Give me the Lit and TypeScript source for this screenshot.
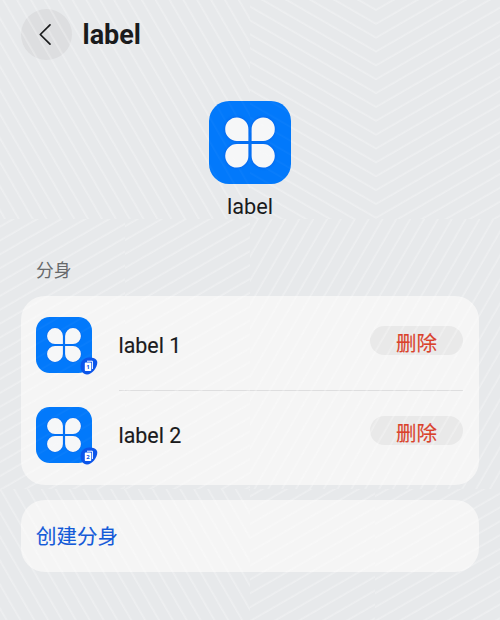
import { LitElement, html, css, svg } from "lit";
import { customElement, property } from "lit/decorators.js";

@customElement("app-icon")
class AppIcon extends LitElement {
  static styles = css`
    :host { display: block; position: relative; z-index: 2; width: 82px; height: 83px; }
    svg { display: block; width: 100%; height: 100%; }
    .tile { fill: #0279fb; }
    .glow { fill: #0767ed; filter: blur(1px); }
    .leaf { fill: #f6f7f8; }
  `;
  render() {
    const leaf = "M39.4 39.4H28A11.6 11.6 0 1 1 39.4 28Z";
    const turns = [0, 90, 180, 270];
    return html`<svg viewBox="0 0 82 82" preserveAspectRatio="none">
      <rect class="tile" width="82" height="82" rx="20"></rect>
      ${turns.map((a) => svg`<path class="glow" stroke="#0767ed" stroke-width="1.5" transform="rotate(${a} 41 41)" d=${leaf}></path>`)}
      ${turns.map((a) => svg`<path class="leaf" transform="rotate(${a} 41 41)" d=${leaf}></path>`)}
    </svg>`;
  }
}

@customElement("clone-row")
class CloneRow extends LitElement {
  @property({ type: Number }) index = 1;
  static styles = css`
    :host { display: flex; align-items: center; height: 56px; padding: 0 16px 0 15px; }
    .icon { position: relative; width: 56px; height: 56px; }
    app-icon { width: 56px; height: 56px; }
    .badge { position: absolute; z-index: 4; left: 44px; top: 39.5px; width: 18px; height: 18px; }
    .num { font: bold 6px "Noto Sans", sans-serif; fill: #0a4fe6; }
    .name { position: relative; z-index: 2; flex: 1; margin-left: 26.5px; padding-top: 2px; font-size: 21.4px; color: #191a1b; line-height: 28px; -webkit-text-stroke: .15px #191a1b; }
    .del { width: 93px; height: 28.5px; margin-top: -9px; border-radius: 14.5px; background: #e9e9e9; color: #da412b;
      font-size: 20.5px; line-height: 36px; text-align: center; -webkit-text-stroke: .12px #da412b; }
    .del span { position: relative; z-index: 2; }
  `;
  render() {
    return html`
      <div class="icon"><app-icon></app-icon>
        <svg class="badge" viewBox="0 0 18 18">
          <path fill="#0b55ea" d="M9 .5C13 .5 17.3 1.8 17.3 5.5C17.3 10.5 12 17.5 7 17.5C3 17.5 .5 13.5 .5 9.3C.5 4.3 4 .5 9 .5Z"></path>
          <path fill="none" stroke="#fff" stroke-width="1" d="M7 4.2H12.4V12"></path>
          <rect x="4.8" y="5.6" width="6.4" height="8.4" rx=".8" fill="#fff"></rect>
          <text class="num" x="8" y="12.1" text-anchor="middle">${this.index}</text>
        </svg>
      </div>
      <div class="name">label ${this.index}</div>
      <div class="del"><span>删除</span></div>`;
  }
}

interface Field { id: string; x: number; y: number; w: number; h: number; angle: number; px: number; py: number; }

/* Each field is ruled with parallel lines through its anchor (px, py). */
const fields: Field[] = [
  { id: "a", x: 0, y: 0, w: 250, h: 219, angle: 60, px: 185.3, py: 219 },
  { id: "b", x: 250, y: 0, w: 126, h: 219, angle: 30, px: 376, py: 217.7 },
  { id: "c", x: 376, y: 0, w: 124, h: 219, angle: -30, px: 376, py: 217.7 },
  { id: "d", x: 0, y: 219, w: 125, h: 270, angle: -30, px: 125, py: 237.5 },
  { id: "e", x: 125, y: 219, w: 125, h: 270, angle: -30, px: 250, py: 251 },
  { id: "f", x: 250, y: 219, w: 250, h: 270, angle: -60, px: 424, py: 219 },
  { id: "g", x: 0, y: 489, w: 250, h: 131, angle: 60, px: 250, py: 537.5 },
  { id: "h", x: 250, y: 489, w: 125, h: 131, angle: -30, px: 250, py: 524 },
  { id: "i", x: 375, y: 489, w: 125, h: 131, angle: -30, px: 375, py: 524 },
];

@customElement("app-root")
class AppRoot extends LitElement {
  static styles = css`
    :host { display: block; position: relative; box-sizing: border-box; width: 500px; height: 620px; padding: 9px 21px 0;
      overflow: hidden; background: #e7e9eb; color: #191a1b; font-family: Roboto, "Noto Sans CJK SC", sans-serif; }
    header { display: flex; align-items: center; height: 51px; }
    .back { width: 51px; height: 51px; border-radius: 50%; background: #dddee0; }
    .back svg { display: block; position: relative; z-index: 2; }
    h1, .hero span, .caption, .create span { position: relative; z-index: 2; }
    h1 { margin: 0 0 0 10.5px; font-size: 27px; line-height: 32px; font-weight: 700; }
    .hero { display: flex; flex-direction: column; align-items: center; padding-top: 41px; }
    .hero span { margin-top: 9px; font-size: 21.7px; line-height: 28px; }
    .caption { margin: 37px 0 0 15px; font-size: 17.8px; line-height: 26px; color: #66686a; height: 26px; }
    .card { background: #f5f5f5; border-radius: 24px; }
    .list { margin-top: 12px; height: 189px; padding-top: 21px; box-sizing: border-box; }
    .rule { height: 1px; background: #dededf; margin: 17px 16px 16px 98px; }
    .create { margin-top: 15px; height: 72px; padding-left: 15px; line-height: 74px; font-size: 20.5px; color: #1259d8;
      -webkit-text-stroke: .12px #1259d8; }
    .lines { position: absolute; inset: 0; z-index: 1; pointer-events: none; }
    .faint { z-index: 3; opacity: .12; }
  `;
  private lines(name: string) {
    return html`<svg class="lines ${name}" width="500" height="620">
      <defs>${fields.map((f) => svg`<pattern id="${name}-${f.id}" patternUnits="userSpaceOnUse" width="50" height="12"
        patternTransform="translate(${f.px} ${f.py}) rotate(${f.angle}) translate(0 -6)"><path d="M0 6H50" stroke="#fff" stroke-opacity=".34" stroke-width="1.25"></path></pattern>`)}</defs>
      ${fields.map((f) => svg`<rect x=${f.x} y=${f.y} width=${f.w} height=${f.h} fill="url(#${name}-${f.id})"></rect>`)}
    </svg>`;
  }
  render() {
    return html`
      <header>
        <div class="back"><svg width="51" height="51" viewBox="0 0 51 51" fill="none" stroke="#191a1b" stroke-width="1.7" stroke-linecap="round" stroke-linejoin="round"><path d="M29 15.8L19.3 25.5L29 35.2"></path></svg></div>
        <h1>label</h1>
      </header>
      <div class="hero"><app-icon></app-icon><span>label</span></div>
      <div class="caption">分身</div>
      <section class="card list">
        <clone-row .index=${1}></clone-row>
        <div class="rule"></div>
        <clone-row .index=${2}></clone-row>
      </section>
      <section class="card create"><span>创建分身</span></section>
      ${this.lines("base")}
      ${this.lines("faint")}`;
  }
}
